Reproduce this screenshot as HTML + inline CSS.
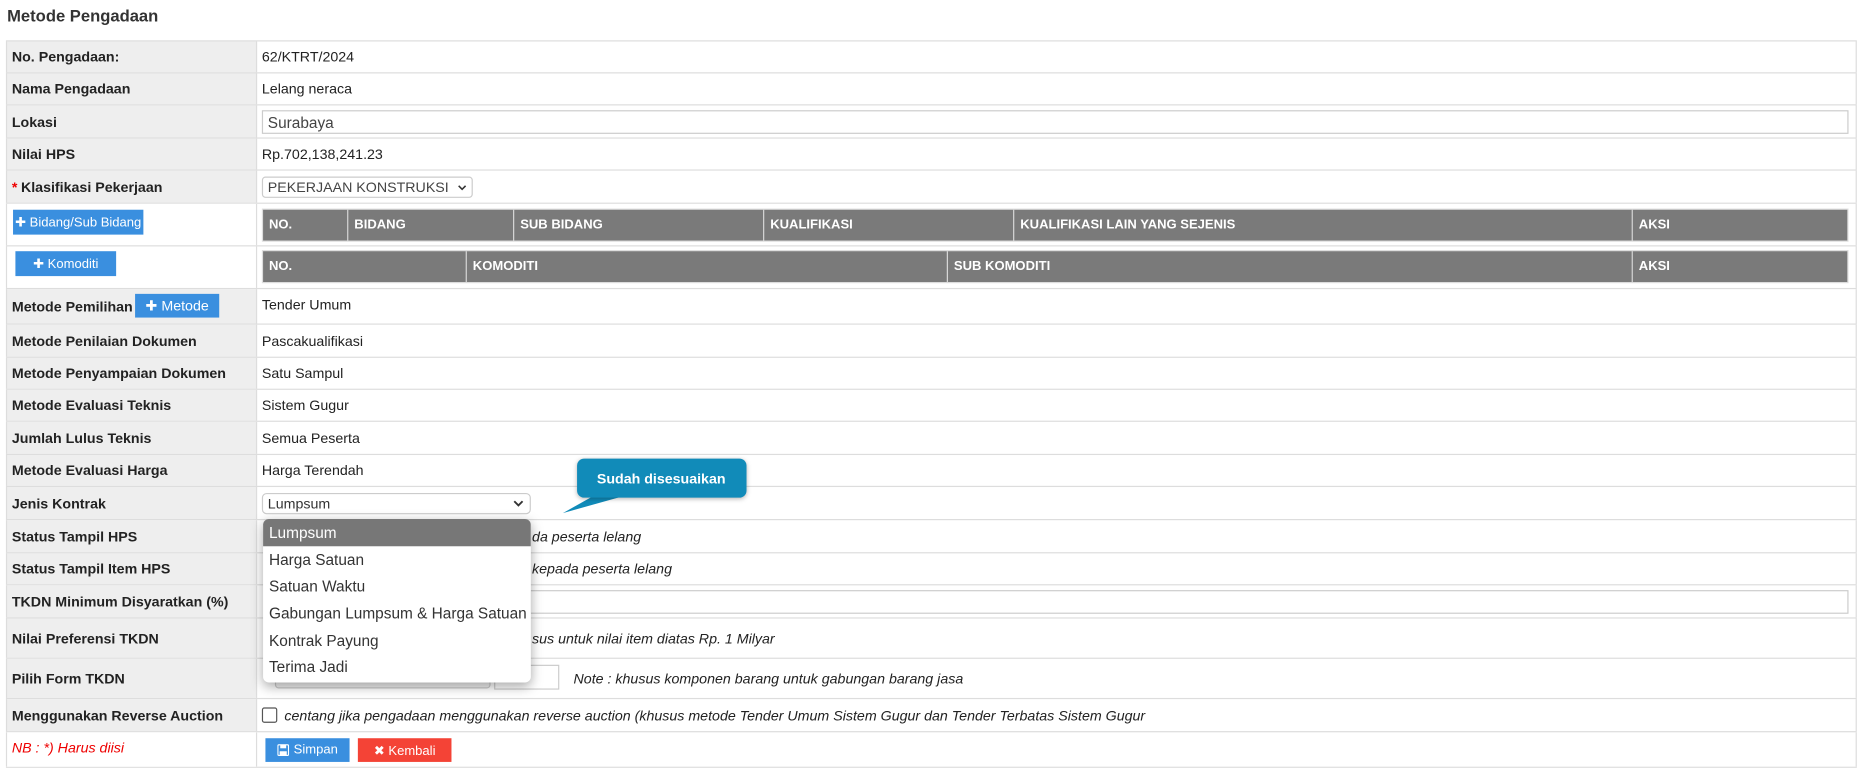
<!DOCTYPE html>
<html><head><meta charset="utf-8">
<style>
*{box-sizing:border-box;margin:0;padding:0}
body{width:1858px;height:775px;background:#fff;font-family:"Liberation Sans",Arial,sans-serif;font-size:12px;color:#222;position:relative;overflow:hidden}
#w{position:absolute;left:0;top:0;width:1568px;height:654px;transform:scale(1.18495);transform-origin:0 0}
.a{position:absolute}
.title{left:6px;top:5px;font-size:14px;font-weight:bold;color:#333}
.row{position:absolute;left:5px;width:1562px;border-top:1px solid #ddd}
.lab{position:absolute;left:0;top:0;bottom:0;width:212px;background:#eee;border-left:1px solid #ddd;border-right:1px solid #ddd;font-weight:bold;padding-left:4px;display:flex;align-items:center}
.lab.w{background:#fff}
.val{position:absolute;left:212px;top:0;bottom:0;right:0;border-right:1px solid #ddd;padding-left:4px;display:flex;align-items:center}
.btn{position:absolute;background:#3a8fdf;color:#fff;font-size:11px;display:flex;align-items:center;justify-content:center}
.th{position:absolute;background:#7a7a7a;color:#fff;font-weight:bold;font-size:11px;display:flex;align-items:center;padding-left:5px;border-right:1px solid #ddd;height:100%}
.hdr{position:absolute;left:221px;width:1339px;border:1px solid #ddd}
.inp{position:absolute;border:1px solid #ccc;background:#fff;font-size:12px;padding-left:4px;display:flex;align-items:center}
i{font-style:italic}
.dd{position:absolute;left:222px;top:438px;width:226px;height:138px;background:#fff;border-radius:5px;box-shadow:0 3px 10px rgba(0,0,0,.35);overflow:hidden;font-size:13px;color:#333}
.dd div{height:22.7px;padding-left:5px;display:flex;align-items:center}
</style></head><body><div id="w">
<div class="a title">Metode Pengadaan</div>

<div class="row" style="top:34px;height:27px"><div class="lab">No. Pengadaan:</div><div class="val">62/KTRT/2024</div></div>
<div class="row" style="top:61px;height:27px"><div class="lab">Nama Pengadaan</div><div class="val">Lelang neraca</div></div>
<div class="row" style="top:88px;height:28px"><div class="lab">Lokasi</div><div class="val"></div></div>
<div class="row" style="top:116px;height:27px"><div class="lab">Nilai HPS</div><div class="val">Rp.702,138,241.23</div></div>
<div class="row" style="top:143px;height:28px"><div class="lab"><span style="color:#e00;margin-right:3px">*</span>Klasifikasi Pekerjaan</div><div class="val"></div></div>
<div class="row" style="top:171px;height:36px"><div class="lab w"></div><div class="val"></div></div>
<div class="row" style="top:207px;height:36px"><div class="lab w"></div><div class="val"></div></div>
<div class="row" style="top:243px;height:30px"><div class="lab">Metode Pemilihan</div><div class="val" style="align-items:flex-start;padding-top:6px">Tender Umum</div></div>
<div class="row" style="top:273px;height:28px"><div class="lab">Metode Penilaian Dokumen</div><div class="val">Pascakualifikasi</div></div>
<div class="row" style="top:301px;height:27px"><div class="lab">Metode Penyampaian Dokumen</div><div class="val">Satu Sampul</div></div>
<div class="row" style="top:328px;height:27px"><div class="lab">Metode Evaluasi Teknis</div><div class="val">Sistem Gugur</div></div>
<div class="row" style="top:355px;height:28px"><div class="lab">Jumlah Lulus Teknis</div><div class="val">Semua Peserta</div></div>
<div class="row" style="top:383px;height:27px"><div class="lab">Metode Evaluasi Harga</div><div class="val">Harga Terendah</div></div>
<div class="row" style="top:410px;height:28px"><div class="lab">Jenis Kontrak</div><div class="val"></div></div>
<div class="row" style="top:438px;height:28px"><div class="lab">Status Tampil HPS</div><div class="val"><i style="margin-left:228px">da peserta lelang</i></div></div>
<div class="row" style="top:466px;height:27px"><div class="lab">Status Tampil Item HPS</div><div class="val"><i style="margin-left:228px">kepada peserta lelang</i></div></div>
<div class="row" style="top:493px;height:28px"><div class="lab">TKDN Minimum Disyaratkan (%)</div><div class="val"></div></div>
<div class="row" style="top:521px;height:34px"><div class="lab">Nilai Preferensi TKDN</div><div class="val"><i style="margin-left:228px">sus untuk nilai item diatas Rp. 1 Milyar</i></div></div>
<div class="row" style="top:555px;height:34px"><div class="lab">Pilih Form TKDN</div><div class="val"><i style="margin-left:263px">Note : khusus komponen barang untuk gabungan barang jasa</i></div></div>
<div class="row" style="top:589px;height:28px"><div class="lab">Menggunakan Reverse Auction</div><div class="val"><span style="display:inline-block;width:13px;height:13px;border:1px solid #555;border-radius:2px;margin-right:6px"></span><i>centang jika pengadaan menggunakan reverse auction (khusus metode Tender Umum Sistem Gugur dan Tender Terbatas Sistem Gugur</i></div></div>
<div class="row" style="top:617px;height:31px;border-bottom:1px solid #ddd"><div class="lab w" style="font-weight:normal;color:#e00;align-items:flex-start;padding-top:6px"><i>NB : *) Harus diisi</i></div><div class="val"></div></div>

<div class="inp" style="left:221px;top:93px;width:1339px;height:20px;font-size:13px;color:#444">Surabaya</div>
<div class="inp" style="left:221px;top:149px;width:178px;height:18px;border-radius:3px;color:#444">PEKERJAAN KONSTRUKSI <svg style="position:absolute;right:4px;top:6px" width="8" height="5" viewBox="0 0 9 6"><path d="M1 1l3.5 3.5L8 1" stroke="#333" stroke-width="1.6" fill="none"/></svg></div>
<div class="inp" style="left:221px;top:416px;width:227px;height:18px;border-radius:4px;color:#333">Lumpsum <svg style="position:absolute;right:5px;top:5px" width="9" height="6" viewBox="0 0 9 6"><path d="M1 1l3.5 3.5L8 1" stroke="#333" stroke-width="1.6" fill="none"/></svg></div>
<div class="inp" style="left:447px;top:498px;width:1113px;height:20px"></div>
<div class="inp" style="left:232px;top:561px;width:182px;height:20px;border-radius:3px;background:#f3f3f3"></div>
<div class="inp" style="left:417px;top:561px;width:55px;height:21px"></div>

<div class="btn" style="left:11px;top:177px;width:110px;height:21px">&#10010;&nbsp;Bidang/Sub Bidang</div>
<div class="btn" style="left:13px;top:212px;width:85px;height:21px">&#10010;&nbsp;Komoditi</div>
<div class="btn" style="left:114px;top:248px;width:71px;height:20px;font-size:12px">&#10010;&nbsp;Metode</div>
<div class="btn" style="left:224px;top:623px;width:71px;height:20px"><svg width="10" height="10" viewBox="0 0 10 10" style="margin-right:4px"><rect x="0.5" y="0.5" width="9" height="9" rx="1" fill="none" stroke="#fff"/><rect x="2.5" y="0.5" width="5" height="3" fill="#fff"/><rect x="2" y="6" width="6" height="3.5" fill="#fff"/></svg>Simpan</div>
<div class="btn" style="left:302px;top:623px;width:79px;height:20px;background:#f44336">&#10006;&nbsp;Kembali</div>

<div class="hdr" style="top:176px;height:28px">
<div class="th" style="left:0;width:72px">NO.</div>
<div class="th" style="left:72px;width:140px">BIDANG</div>
<div class="th" style="left:212px;width:211px">SUB BIDANG</div>
<div class="th" style="left:423px;width:211px">KUALIFIKASI</div>
<div class="th" style="left:634px;width:522px">KUALIFIKASI LAIN YANG SEJENIS</div>
<div class="th" style="left:1156px;width:181px;border-right:0">AKSI</div>
</div>
<div class="hdr" style="top:211px;height:28px">
<div class="th" style="left:0;width:172px">NO.</div>
<div class="th" style="left:172px;width:406px">KOMODITI</div>
<div class="th" style="left:578px;width:578px">SUB KOMODITI</div>
<div class="th" style="left:1156px;width:181px;border-right:0">AKSI</div>
</div>

<svg class="a" style="left:470px;top:385px" width="170" height="52">
<path d="M30 34 L5 48 L55 34 Z" fill="#118bb9"/>
<rect x="17" y="2" width="143" height="33" rx="6" fill="#118bb9" style="filter:drop-shadow(0 1px 2px rgba(0,0,0,.3))"/>
<text x="88" y="23" text-anchor="middle" font-family="Liberation Sans, sans-serif" font-weight="bold" font-size="12" fill="#fff">Sudah disesuaikan</text>
</svg>

<div class="dd">
<div style="background:#777;color:#fff">Lumpsum</div>
<div>Harga Satuan</div>
<div>Satuan Waktu</div>
<div>Gabungan Lumpsum &amp; Harga Satuan</div>
<div>Kontrak Payung</div>
<div>Terima Jadi</div>
</div>
</div></body></html>
